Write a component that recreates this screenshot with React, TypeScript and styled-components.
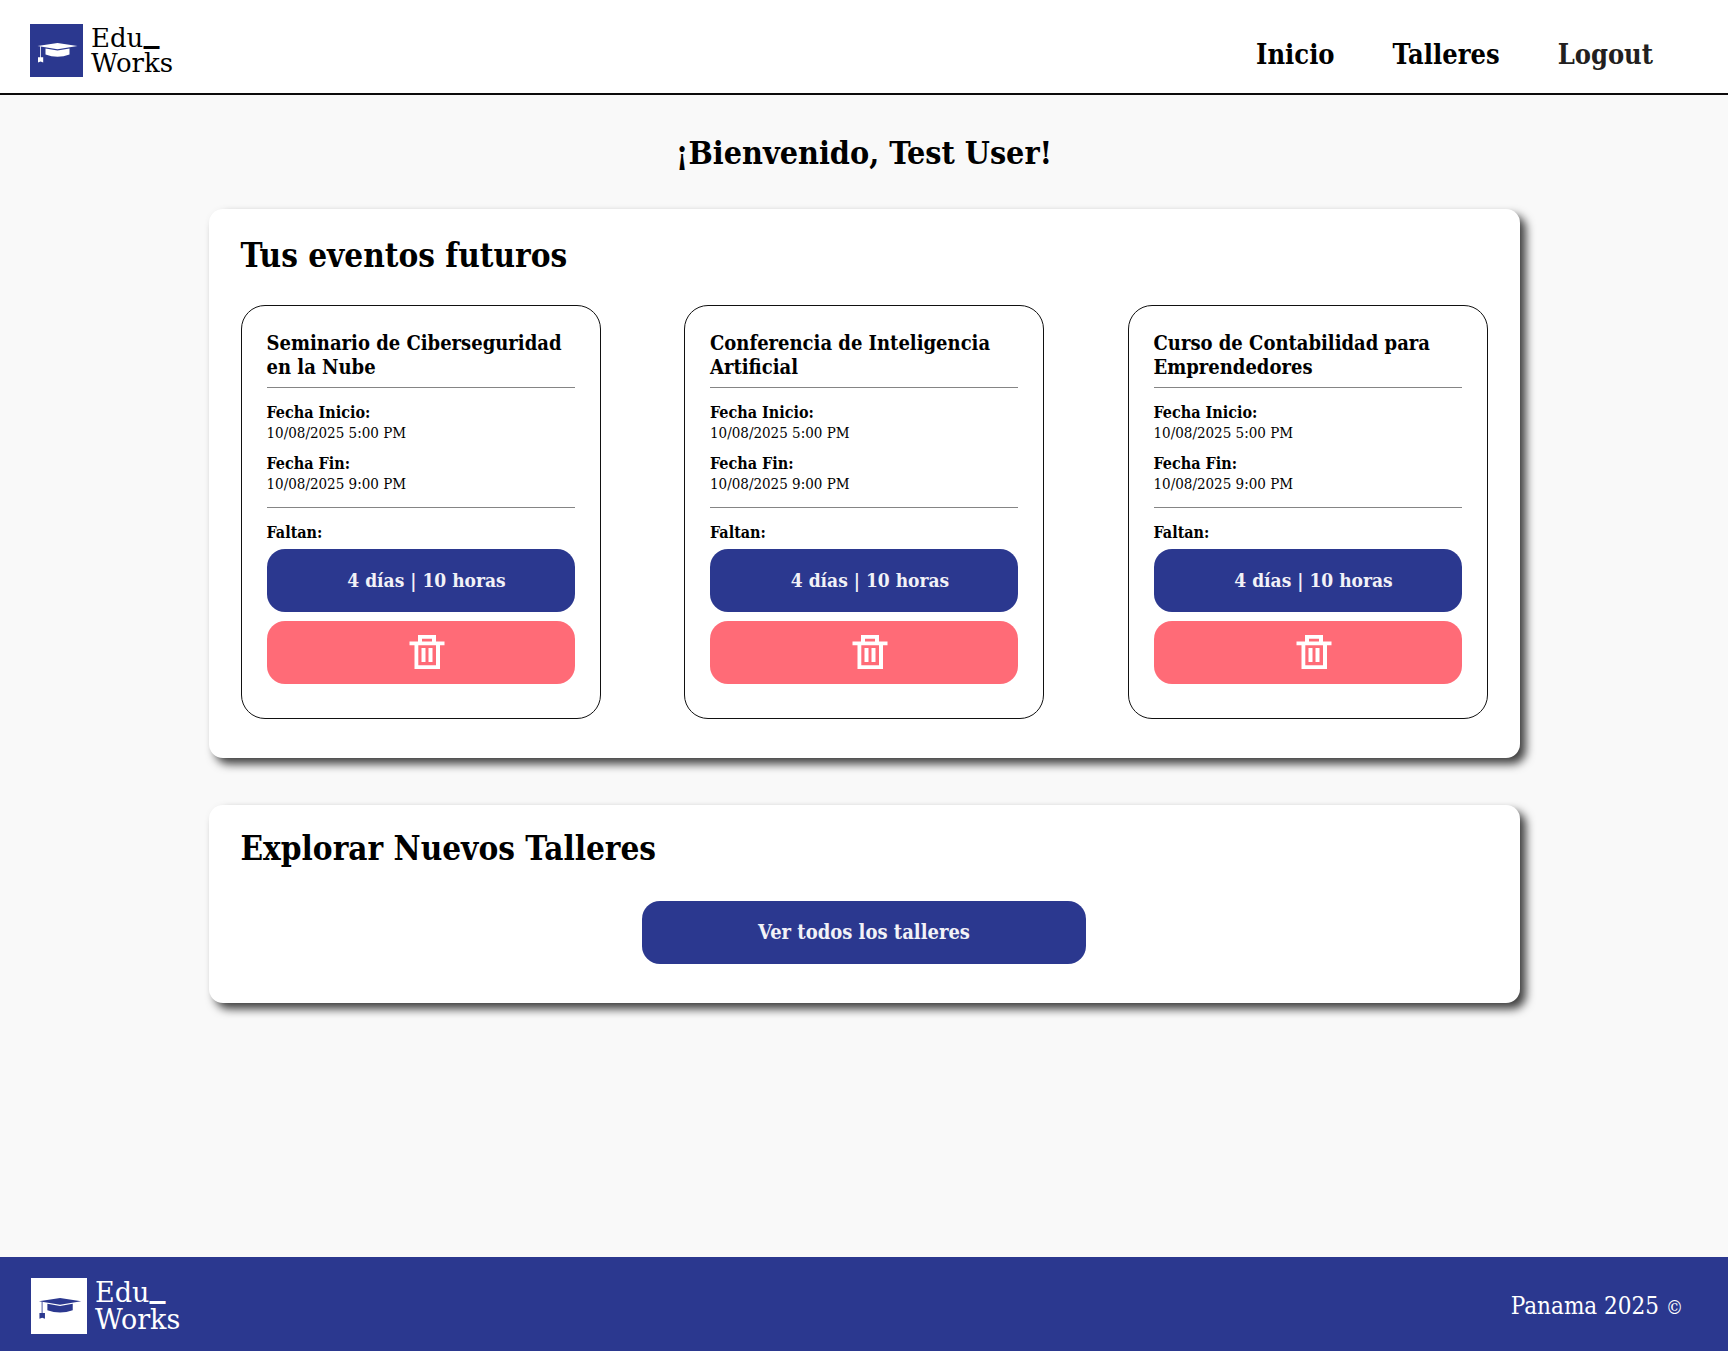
import React from "react";
import styled, { createGlobalStyle } from "styled-components";

const BLUE = "#2b388f";
const SLAB = '"DejaVu Serif Condensed", "DejaVu Serif", "Liberation Serif", serif';
const SLAB_WIDE = '"DejaVu Serif", "Liberation Serif", serif';

const GlobalStyle = createGlobalStyle`
  *, *::before, *::after { box-sizing: border-box; }
  body { margin: 0; background: #f9f9f9; color: #000; font-family: ${SLAB}; }
  h1, h2, h3, p, dl, dd, dt { margin: 0; }
`;

const Page = styled.div`
  min-height: 100vh;
  display: flex;
  flex-direction: column;
`;

const Header = styled.header`
  display: flex;
  align-items: center;
  justify-content: space-between;
  padding: 24px 75px 16px 30px;
  background: #fff;
  border-bottom: 2px solid #0c0a0b;
`;

const Nav = styled.nav`
  display: flex;
  gap: 58px;
  padding-top: 8px;
`;

const NavLink = styled.a<{ $muted?: boolean }>`
  color: ${(p) => (p.$muted ? "#231f20" : "#000")};
  font-size: 27px;
  font-weight: 700;
  line-height: 32px;
  text-decoration: none;
`;

const Brand = styled.a<{ $light?: boolean }>`
  display: flex;
  align-items: center;
  gap: 8px;
  color: ${(p) => (p.$light ? "#fff" : "#000")};
  text-decoration: none;
`;

const BrandName = styled.span<{ $light?: boolean }>`
  display: flex;
  flex-direction: column;
  font-family: ${SLAB_WIDE};
  font-size: ${(p) => (p.$light ? 27 : 26)}px;
  line-height: ${(p) => (p.$light ? 27 : 25)}px;
`;

const Underscore = styled.span`
  font-size: 32px;
  font-weight: 700;
  line-height: 0;
  vertical-align: 6px;
`;

const Main = styled.main`
  flex: 1;
  width: 100%;
  max-width: 1311px;
  margin: 0 auto;
  padding: 38px 0 48px;
`;

const Welcome = styled.h1`
  font-size: 32px;
  line-height: 40px;
  text-align: center;
`;

const Panel = styled.section<{ $compact?: boolean }>`
  margin-top: ${(p) => (p.$compact ? 47 : 36)}px;
  padding: ${(p) => (p.$compact ? 24 : 27)}px 32px 39px;
  background: #fff;
  border-radius: 14px;
  box-shadow: 6px 6px 10px rgba(0, 0, 0, 0.75);
`;

const PanelTitle = styled.h2`
  font-size: 33px;
  line-height: 40px;
`;

const CardGrid = styled.div`
  display: grid;
  grid-template-columns: repeat(auto-fit, 360px);
  justify-content: space-between;
  row-gap: 32px;
  margin-top: 29px;
`;

const Card = styled.article`
  padding: 25px 25px 34px;
  border: 1px solid #111;
  border-radius: 24px;
`;

const CardTitle = styled.h3`
  margin-bottom: 8px;
  font-size: 20px;
  line-height: 24px;
`;

const Rule = styled.hr`
  height: 1px;
  margin: 0;
  border: 0;
  background: #858585;
`;

const Details = styled.dl`
  display: grid;
  row-gap: 10px;
  padding: 14px 0 13px;
`;

const Term = styled.dt`
  font-size: 16px;
  font-weight: 700;
  line-height: 21px;
`;

const Value = styled.dd`
  font-size: 15px;
  line-height: 20px;
`;

const Remaining = styled.p`
  padding: 14px 0 6px;
  font-size: 16px;
  font-weight: 700;
  line-height: 21px;
`;

const Button = styled.button<{ $danger?: boolean; $inCard?: boolean }>`
  display: flex;
  align-items: center;
  justify-content: center;
  width: 100%;
  max-width: ${(p) => (p.$inCard ? "none" : "444px")};
  height: 63px;
  margin: 0 auto;
  padding: 0 0 2px ${(p) => (p.$inCard ? 12 : 0)}px;
  border: 0;
  border-radius: 18px;
  background: ${(p) => (p.$danger ? "#ff6b77" : BLUE)};
  color: #f2f2f7;
  font-family: inherit;
  font-size: ${(p) => (p.$inCard ? 19 : 20)}px;
  font-weight: 700;
  line-height: 24px;
  cursor: pointer;
`;

const Actions = styled.div`
  display: grid;
  gap: 9px;
`;

const Explore = styled.div`
  padding-top: 32px;
`;

const Footer = styled.footer`
  display: flex;
  align-items: center;
  justify-content: space-between;
  padding: 21px 45px 17px 31px;
  background: ${BLUE};
  color: #fff;
`;

const Copyright = styled.p`
  font-size: 24px;
  line-height: 32px;
`;

const CopyMark = styled.span`
  font-size: 19px;
`;

function Cap({ light }: { light?: boolean }) {
  const size = light ? 56 : 53;
  const ink = light ? BLUE : "#fff";
  return (
    <svg width={size} height={size} viewBox="0 0 53 53" aria-hidden="true">
      <rect width="53" height="53" fill={light ? "#fff" : BLUE} />
      <path d="M7.5 22 L27.5 19 L47.5 22 L27.5 25.3 Z" fill={ink} />
      <path d="M15.5 24.4 L27.5 26.4 L39.5 24.4 V30.5 Q27.5 35 15.5 30.5 Z" fill={ink} />
      <path d="M10.5 22.3 V34" stroke={ink} strokeWidth="0.8" fill="none" />
      <path d="M8 33.2 H13.2 V38.6 L10.6 37.6 L8 38.6 Z" fill={ink} />
    </svg>
  );
}

function Logo({ light }: { light?: boolean }) {
  return (
    <Brand href="#inicio" $light={light}>
      <Cap light={light} />
      <BrandName $light={light}>
        <span>
          Edu<Underscore>_</Underscore>
        </span>
        <span>Works</span>
      </BrandName>
    </Brand>
  );
}

function TrashIcon() {
  return (
    <svg width="36" height="34" viewBox="0 0 36 34" fill="#fff" fillRule="evenodd" aria-hidden="true">
      <path d="M9 0 H27 V6.5 H35.5 V10.3 H31 V34 H5.5 V10.3 H0.5 V6.5 H9 Z M13 3.7 V6.5 H23 V3.7 Z M9.3 10.3 V30.2 H27 V10.3 Z" />
      <path d="M12.5 13 H16.5 V27 H12.5 Z M19.5 13 H23.5 V27 H19.5 Z" />
    </svg>
  );
}

const events = [
  { title: "Seminario de Ciberseguridad en la Nube", start: "10/08/2025 5:00 PM", end: "10/08/2025 9:00 PM", left: "4 días | 10 horas" },
  { title: "Conferencia de Inteligencia Artificial", start: "10/08/2025 5:00 PM", end: "10/08/2025 9:00 PM", left: "4 días | 10 horas" },
  { title: "Curso de Contabilidad para Emprendedores", start: "10/08/2025 5:00 PM", end: "10/08/2025 9:00 PM", left: "4 días | 10 horas" },
];

function EventCard({ title, start, end, left }: (typeof events)[number]) {
  return (
    <Card>
      <CardTitle>{title}</CardTitle>
      <Rule />
      <Details>
        <div>
          <Term>Fecha Inicio:</Term>
          <Value>{start}</Value>
        </div>
        <div>
          <Term>Fecha Fin:</Term>
          <Value>{end}</Value>
        </div>
      </Details>
      <Rule />
      <Remaining>Faltan:</Remaining>
      <Actions>
        <Button type="button" $inCard>{left}</Button>
        <Button type="button" $danger $inCard aria-label={`Eliminar ${title}`}>
          <TrashIcon />
        </Button>
      </Actions>
    </Card>
  );
}

export default function App() {
  return (
    <Page>
      <GlobalStyle />
      <Header>
        <Logo />
        <Nav>
          <NavLink href="#inicio">Inicio</NavLink>
          <NavLink href="#talleres">Talleres</NavLink>
          <NavLink href="#logout" $muted>Logout</NavLink>
        </Nav>
      </Header>
      <Main>
        <Welcome>¡Bienvenido, Test User!</Welcome>
        <Panel>
          <PanelTitle>Tus eventos futuros</PanelTitle>
          <CardGrid>
            {events.map((e) => (
              <EventCard key={e.title} {...e} />
            ))}
          </CardGrid>
        </Panel>
        <Panel $compact>
          <PanelTitle>Explorar Nuevos Talleres</PanelTitle>
          <Explore>
            <Button type="button">Ver todos los talleres</Button>
          </Explore>
        </Panel>
      </Main>
      <Footer>
        <Logo light />
        <Copyright>
          Panama 2025 <CopyMark>©</CopyMark>
        </Copyright>
      </Footer>
    </Page>
  );
}
